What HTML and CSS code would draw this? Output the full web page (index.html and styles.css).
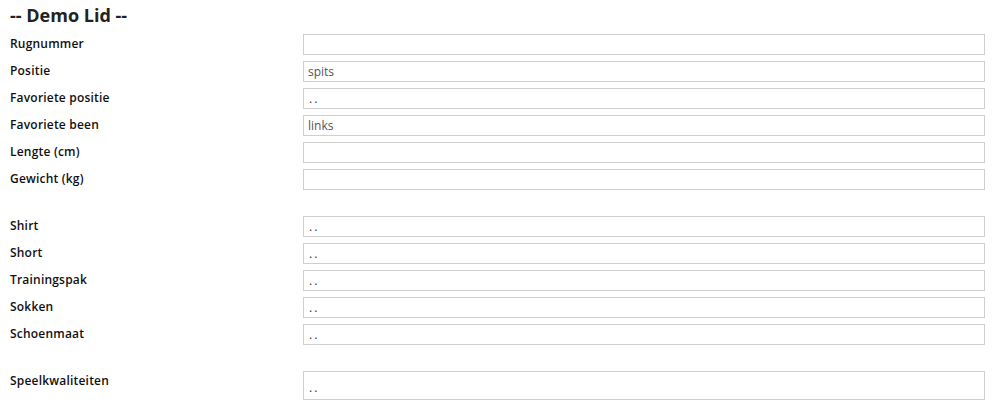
FILE: index.html
```html
<!DOCTYPE html>
<html lang="nl">
<head>
<meta charset="utf-8">
<title>Demo Lid</title>
<link rel="stylesheet" href="styles.css">
</head>
<body>
<div class="page">
  <h1 class="title">-- Demo Lid --</h1>
  <div class="group">
    <div class="row"><span class="label">Rugnummer</span><div class="field"></div></div>
    <div class="row"><span class="label">Positie</span><div class="field">spits</div></div>
    <div class="row"><span class="label">Favoriete positie</span><div class="field dots">..</div></div>
    <div class="row"><span class="label">Favoriete been</span><div class="field">links</div></div>
    <div class="row"><span class="label">Lengte (cm)</span><div class="field"></div></div>
    <div class="row"><span class="label">Gewicht (kg)</span><div class="field"></div></div>
  </div>
  <div class="group">
    <div class="row"><span class="label">Shirt</span><div class="field dots">..</div></div>
    <div class="row"><span class="label">Short</span><div class="field dots">..</div></div>
    <div class="row"><span class="label">Trainingspak</span><div class="field dots">..</div></div>
    <div class="row"><span class="label">Sokken</span><div class="field dots">..</div></div>
    <div class="row"><span class="label">Schoenmaat</span><div class="field dots">..</div></div>
  </div>
  <div class="group">
    <div class="row"><span class="label">Speelkwaliteiten</span><div class="field tall dots">..</div></div>
  </div>
</div>
</body>
</html>
```
FILE: styles.css
```css
html, body {
  margin: 0;
  padding: 0;
  background: #ffffff;
}
.page {
  padding: 4px 14px 0 10px;
  font-family: "Open Sans", "DejaVu Sans", sans-serif;
  color: #1a1a1a;
}
.title {
  margin: 0;
  font-size: 18px;
  line-height: 22px;
  font-weight: 700;
  color: #222;
  height: 30px;
}
.group {
  display: flex;
  flex-direction: column;
  gap: 6px;
  margin-bottom: 26px;
}
.row {
  display: grid;
  grid-template-columns: 293px 682px;
  align-items: start;
}
.label {
  font-size: 12px;
  line-height: 18px;
  padding-top: 1px;
  font-weight: 600;
  letter-spacing: 0.2px;
  color: #111;
}
.field {
  box-sizing: border-box;
  height: 21px;
  border: 1px solid #cfcfcf;
  padding: 0 4px;
  font-size: 12px;
  line-height: 19px;
  color: #555;
}
.field.dots {
  letter-spacing: 2px;
  padding-left: 5px;
  color: #333;
}
.field.tall {
  height: 29px;
  line-height: 31px;
}
```
